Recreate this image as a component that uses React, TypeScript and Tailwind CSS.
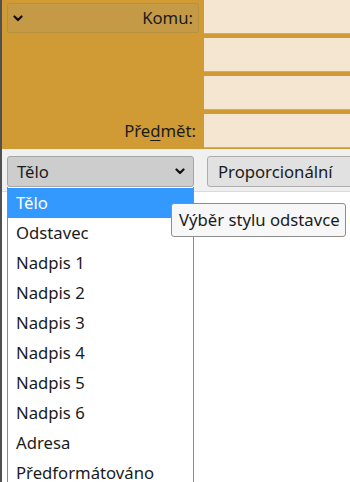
import React from "react";

const ITEMS = [
  "Tělo",
  "Odstavec",
  "Nadpis 1",
  "Nadpis 2",
  "Nadpis 3",
  "Nadpis 4",
  "Nadpis 5",
  "Nadpis 6",
  "Adresa",
  "Předformátováno",
];

function Chevron({ className = "" }: { className?: string }) {
  return (
    <svg width="10" height="7" viewBox="0 0 10 7" className={className}>
      <path d="M1.5 1.5 L5 5 L8.5 1.5" fill="none" stroke="#111" strokeWidth="2.2" strokeLinecap="round" strokeLinejoin="round" />
    </svg>
  );
}

function Field() {
  return <div className="h-[34px] bg-[#f4e6d0] border-b border-[#a9afc6]" />;
}

export default function App() {
  return (
    <div
      className="relative w-[350px] h-[482px] overflow-hidden bg-white border-l-2 border-[#505050] text-[#1b1b1b] text-[16.7px]"
      style={{ fontFamily: '"Noto Sans", "Open Sans", sans-serif' }}
    >
      {/* address header */}
      <div className="flex bg-[#d09b34] h-[149px]">
        <div className="w-[202px] flex flex-col pl-[5px] pr-[5px]">
          <button className="mt-[3px] h-[30px] flex items-center justify-between pl-[5px] pr-[5px] rounded-[2px] bg-[#c59a47] border border-[#b89040]">
            <Chevron />
            <span>Komu:</span>
          </button>
          <div className="flex-1" />
          <div className="h-[36px] flex items-center justify-end pr-[3px]">
            <span>
              Pře<span className="underline underline-offset-[3px]">d</span>mět:
            </span>
          </div>
        </div>
        <div className="flex-1 flex flex-col gap-[4px]">
          <Field />
          <Field />
          <Field />
          <Field />
        </div>
      </div>

      {/* format toolbar */}
      <div className="h-[43px] bg-[#f0f0f0] border-b border-[#dadada] flex items-start pt-[7px] pl-[5px] gap-[13px]">
        <div className="w-[187px] h-[31px] shrink-0 flex items-center justify-between pl-[9px] pr-[8px] bg-[#cdcdcd] border border-[#a6a6a6] rounded-[3px]">
          <span>Tělo</span>
          <Chevron />
        </div>
        <div className="w-[160px] h-[31px] shrink-0 flex items-center pl-[10px] bg-[#e1e1e1] border border-[#adadad] rounded-[3px]">
          <span>Proporcionální</span>
        </div>
      </div>

      {/* open dropdown */}
      <div className="absolute left-[5px] top-[187px] w-[187px] h-[310px] bg-white border-x border-[#8a8a8a] py-[1px]">
        {ITEMS.map((it, i) => (
          <div
            key={it}
            className={[
              "h-[30px] flex items-center pl-[8px] whitespace-nowrap",
              i === 0 ? "bg-[#3399ff] text-white" : "",
            ].join(" ")}
          >
            {it}
          </div>
        ))}
      </div>

      {/* tooltip */}
      <div className="absolute left-[169px] top-[203px] h-[34px] w-[175px] flex items-center pl-[7px] bg-[#f7f7f7] border border-[#8e8e8e] rounded-[3px] whitespace-nowrap">
        Výběr stylu odstavce
      </div>
    </div>
  );
}
